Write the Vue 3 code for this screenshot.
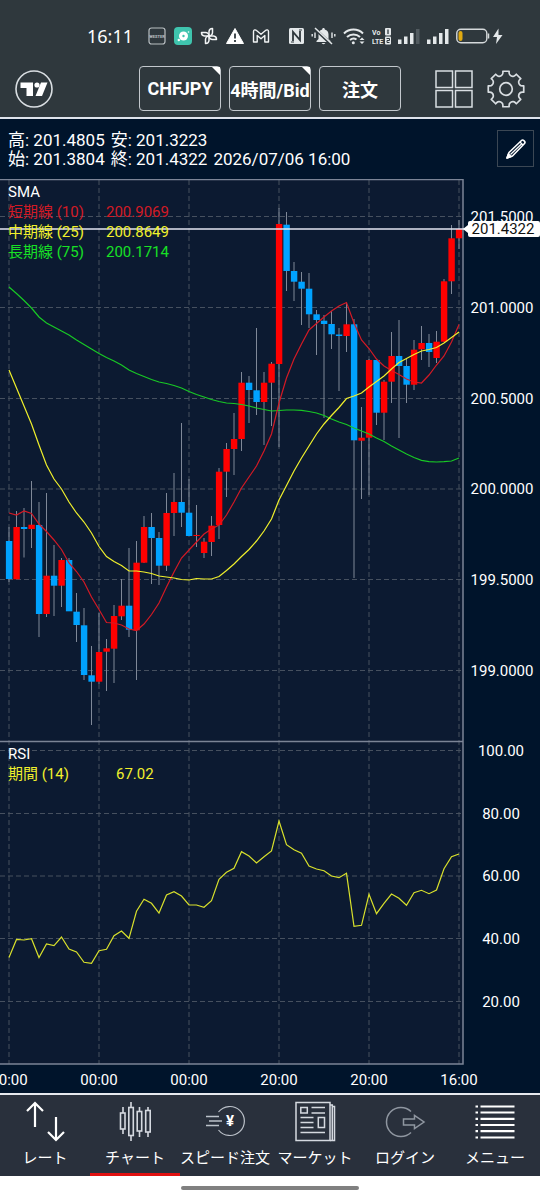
<template>
  <div class="app">
    <header class="top">
      <div class="status-bar">
        <div class="status-group">
          <span class="clock">16:11</span>
          <svg width="18" height="18" viewBox="0 0 18 18" fill="none">
            <rect x="1" y="1" width="16" height="16" rx="2.500" stroke="#b9bfc2" stroke-width="1.200" />
            <text x="9" y="11" class="tiny" text-anchor="middle">WESTER</text>
          </svg>
          <svg width="18" height="18" viewBox="0 0 18 18">
            <rect width="18" height="18" rx="4" fill="#3fc4ae" />
            <circle cx="9.500" cy="9" r="4.500" fill="#fff" />
            <circle cx="9.500" cy="9" r="1.200" fill="#3fc4ae" />
            <circle cx="4.800" cy="13" r="1.200" fill="#fff" />
            <circle cx="14.500" cy="5" r="0.800" fill="#fff" />
          </svg>
          <svg width="18" height="18" viewBox="0 0 18 18" fill="none" stroke="#f2f4f5" stroke-width="1.500" stroke-linejoin="round">
            <path d="M9 9V4.500A3.400 3.400 0 0 1 12.500 1.500V5.500A3.500 3.500 0 0 1 9 9Z" />
            <path d="M9 9H13.500A3.400 3.400 0 0 1 16.500 12.500H12.500A3.500 3.500 0 0 1 9 9Z" />
            <path d="M9 9V13.500A3.400 3.400 0 0 1 5.500 16.500V12.500A3.500 3.500 0 0 1 9 9Z" />
            <path d="M9 9H4.500A3.400 3.400 0 0 1 1.500 5.500H5.500A3.500 3.500 0 0 1 9 9Z" />
          </svg>
          <svg width="18" height="18" viewBox="0 0 18 18">
            <path d="M9 1.500L17.500 16.500H.5Z" fill="#fff" stroke="#fff" stroke-linejoin="round" />
            <path d="M9 6.500V11.500M9 13V15" stroke="#2f383d" stroke-width="1.800" />
          </svg>
          <svg width="18" height="18" viewBox="0 0 18 18" fill="none" stroke="#f2f4f5" stroke-width="1.400" stroke-linejoin="round">
            <path d="M1.500 15V4.500C1.500 2.500 3.500 2.500 4.500 3.500L9 7.200L13.500 3.500C14.500 2.500 16.500 2.500 16.500 4.500V15H12.800V8.500L9 11.700L5.200 8.500V15Z" />
          </svg>
        </div>
        <div class="status-group right">
          <svg width="15" height="16" viewBox="0 0 15 16">
            <rect width="15" height="16" rx="1.500" fill="#e4e8ea" />
            <path d="M4 13V4L11 12V3" fill="none" stroke="#2f383d" stroke-width="1.800" />
            <path d="M2 14H5M10 2H13" stroke="#2f383d" />
          </svg>
          <svg width="25" height="18" viewBox="0 0 25 18" fill="#e4e8ea">
            <path d="M12.500 1C13.300 1 13.800 1.600 13.800 2.400C16.300 3 17.500 5 17.500 7.500V12L19.500 14V15H5.500V14L7.500 12V7.500C7.500 5 8.700 3 11.200 2.400C11.200 1.600 11.700 1 12.500 1ZM10.700 16H14.300C14 17.500 11 17.500 10.700 16Z" />
            <path d="M3 1L20 17" stroke="#2f383d" stroke-width="3" />
            <path d="M4 1L21 17" stroke="#e4e8ea" stroke-width="1.500" />
            <path d="M1.200 7V9.500M4 5.500V11M23.800 7V9.500M21 5.500V11" stroke="#e4e8ea" stroke-width="1.400" />
          </svg>
          <svg width="22" height="18" viewBox="0 0 22 18" fill="none" stroke="#e4e8ea" stroke-width="2">
            <path d="M1 6.500A13.500 13.500 0 0 1 20 6.500M4 10A9.500 9.500 0 0 1 17 10M7 13A5.500 5.500 0 0 1 13.500 12.500" />
            <circle cx="10.300" cy="15.700" r="1.500" fill="#e4e8ea" stroke="none" />
            <path d="M16.500 13L19 10.500L21.500 13ZM16.500 14.500L19 17L21.500 14.500Z" fill="#e4e8ea" stroke="none" />
          </svg>
          <svg width="19" height="18" viewBox="0 0 19 18" fill="#e4e8ea">
            <text x="0" y="8" class="volte">Vo</text>
            <text x="0" y="17" class="volte">LTE</text>
            <rect x="13" y="1" width="6" height="7.500" rx="1" />
            <path d="M16 2.500V7" stroke="#2f383d" stroke-width="1.300" />
            <rect x="13" y="9.500" width="6" height="8" rx="1" />
            <path d="M14.500 11.500H17.500V13.500H15V15.500H17.500" fill="none" stroke="#2f383d" />
          </svg>
          <svg width="22" height="18" viewBox="0 0 22 18" fill="#e4e8ea">
            <rect x="0" y="12.500" width="3.500" height="4.500" />
            <rect x="6" y="9.500" width="3.500" height="7.500" />
            <rect x="12" y="6" width="3.500" height="11" />
            <rect x="18" y="2" width="3.500" height="15" fill="#525b60" />
          </svg>
          <svg width="22" height="18" viewBox="0 0 22 18" fill="#e4e8ea">
            <rect x="0" y="12.500" width="3.500" height="4.500" />
            <rect x="6" y="9.500" width="3.500" height="7.500" />
            <rect x="12" y="6" width="3.500" height="11" />
            <rect x="18" y="2" width="3.500" height="15" />
          </svg>
          <svg width="48" height="18" viewBox="0 0 48 18" fill="none">
            <rect x="0.800" y="2.300" width="30" height="13.500" rx="4" stroke="#d5d9db" stroke-width="1.400" />
            <rect x="2.500" y="4" width="4" height="10" rx="2" fill="#e0a911" />
            <path d="M32.500 6.500V11.500" stroke="#d5d9db" stroke-width="1.500" />
            <path d="M42.500 1.500L37 10H41L40 17L46.500 8H42.500Z" fill="#e4e8ea" />
          </svg>
        </div>
      </div>

      <div class="toolbar">
        <button class="icon-btn" aria-label="TradingView">
          <svg width="38" height="38" viewBox="0 0 38 38">
            <circle cx="19" cy="19" r="18" fill="none" stroke="#d9dee2" stroke-width="1.600" />
            <path d="M5.500 12.500H18V26H11.500V18H5.500Z" fill="#fff" />
            <circle cx="22" cy="15" r="2.600" fill="#fff" />
            <path d="M26 12.500H32.500L27 26H20.500Z" fill="#fff" />
          </svg>
        </button>
        <div class="toolbar-buttons">
          <button v-for="btn in toolButtons" :key="btn.label" class="tool-btn" :class="{ corner: btn.corner }">
            {{ btn.label }}
          </button>
        </div>
        <div class="toolbar-icons">
          <button class="icon-btn" aria-label="レイアウト">
            <svg width="38" height="38" viewBox="0 0 38 38" fill="none" stroke="#d9dee2" stroke-width="1.500">
              <rect x="1" y="1" width="16.500" height="16.500" />
              <rect x="20.500" y="1" width="16.500" height="16.500" />
              <rect x="1" y="20.500" width="16.500" height="16.500" />
              <rect x="20.500" y="20.500" width="16.500" height="16.500" />
            </svg>
          </button>
          <button class="icon-btn" aria-label="設定">
            <svg width="38" height="38" viewBox="0 0 38 38" fill="none" stroke="#d9dee2" stroke-width="1.700" stroke-linejoin="round">
              <path :d="gearPath" />
              <circle cx="19" cy="19" r="6.300" />
            </svg>
          </button>
        </div>
      </div>
    </header>

    <main>
      <div class="quote">
        <div class="quote-values">
          <span>高: 201.4805</span><span>安: 201.3223</span><span></span>
          <span>始: 201.3804</span><span>終: 201.4322</span><span>2026/07/06 16:00</span>
        </div>
        <button class="edit-btn" aria-label="描画">
          <svg width="24" height="24" viewBox="0 0 24 24" fill="none" stroke="#fff" stroke-width="1.600" stroke-linejoin="round">
            <path d="M3 21L5 15.500L17.500 3.500C19 2 22 5 20.500 6.500L8.500 19Z" />
            <path d="M6.500 17.500L18 6.500M16 5L19 8" stroke-width="1.200" />
            <path d="M3 21L4.500 17L7 19.500Z" fill="#fff" />
          </svg>
        </button>
      </div>

      <div class="chart">
        <svg class="chart-svg" viewBox="0 179 540 914">
          <rect x="-2" y="179.500" width="465" height="884.500" fill="#0c1a31" />
          <g class="grid">
            <line v-for="g in priceGrid" :key="g.label" x1="0" x2="463" :y1="g.y" :y2="g.y" />
            <line v-for="g in rsiGrid" :key="g.label" x1="0" x2="463" :y1="g.y" :y2="g.y" />
            <line v-for="t in timeGrid" :key="t.x" :x1="t.x" :x2="t.x" y1="180" y2="1064" />
          </g>

          <g v-for="(c, i) in candles" :key="i">
            <line class="wick" :x1="xAt(i)" :x2="xAt(i)" :y1="c[3]" :y2="c[4]" />
            <rect :x="xAt(i) - 3.1" :y="c[1]" width="6.400" :height="c[2] - c[1]" :fill="c[0] ? '#ff0000' : '#00a2ff'" />
          </g>

          <polyline class="series" :points="toPoints(smaLong)" stroke="#18c925" />
          <polyline class="series" :points="toPoints(smaShort)" stroke="#d31a25" />
          <polyline class="series" :points="toPoints(smaMiddle)" stroke="#f0f02c" />
          <polyline class="series" :points="toPoints(rsi)" stroke="#d8e02c" />

          <path class="frame" d="M0 179.500H463V1064H0M0 741.500H463" />

          <g class="axis">
            <text v-for="g in priceGrid" :key="g.label" x="502" :y="g.y + 5">{{ g.label }}</text>
            <text v-for="g in rsiGrid" :key="g.label" x="501" :y="g.y + 5">{{ g.label }}</text>
            <text v-for="t in timeGrid" :key="t.x" :x="t.x" y="1085">{{ t.label }}</text>
          </g>

          <!-- current price -->
          <line x1="0" x2="466" y1="229" y2="229" stroke="#e3e6f2" stroke-width="1.600" />
          <path d="M463 229L468 225V223Q468 221 470 221H538Q540 221 540 223V235Q540 237 538 237H470Q468 237 468 235V233Z" fill="#fff" />
          <text class="price-tag" x="503" y="234">201.4322</text>
        </svg>

        <dl class="legend sma">
          <dt>SMA</dt><dd></dd>
          <template v-for="s in smaLegend" :key="s.name">
            <dt :class="s.cls">{{ s.name }}</dt>
            <dd :class="s.cls">{{ s.value }}</dd>
          </template>
        </dl>
        <dl class="legend rsi">
          <dt>RSI</dt><dd></dd>
          <dt class="middle">期間 (14)</dt>
          <dd class="middle">67.02</dd>
        </dl>
      </div>
    </main>

    <nav class="tabs">
      <button v-for="tab in tabs" :key="tab.id" class="tab" :class="{ active: currentTab === tab.id }"
        @click="currentTab = tab.id">
        <svg width="48" height="42" viewBox="0 0 48 42" fill="none" :stroke="tab.color" stroke-width="1.500">
          <g v-if="tab.id === 'rate'" stroke-width="2.200">
            <path d="M14 26V2M6 10L14 2L22 10" />
            <path d="M35 16V39M27 31L35 39L43 31" />
          </g>
          <g v-else-if="tab.id === 'chart'" stroke-width="1.600">
            <path d="M12 6V12M12 28V33M20 1V7M20 34V40M28.500 6V11M28.500 30V36M37 6V10M37 31V36" />
            <rect x="9.500" y="12" width="4.500" height="16" />
            <rect x="17.800" y="6.500" width="4.500" height="28" />
            <rect x="26.200" y="10.500" width="4.500" height="19.500" />
            <rect x="34.700" y="9.500" width="4.500" height="21.500" />
          </g>
          <g v-else-if="tab.id === 'speed'">
            <path d="M17.500 11A14.500 14.500 0 1 1 17.500 29" stroke-width="1.200" />
            <path d="M5 15.500H18M8 20H21M5 24.500H18" />
            <text x="29" y="25" class="yen">¥</text>
          </g>
          <g v-else-if="tab.id === 'market'">
            <rect x="5" y="1.500" width="34" height="38" />
            <path d="M39 4H41.300V39.500H39M41.300 5.500H43.500V39.500H39" />
            <rect x="9.800" y="6.500" width="6.500" height="5.500" />
            <path d="M20.500 6.500H34M20.500 12H34M9.500 16.500H22.500M9.500 21.500H22.500M9.500 26.500H22.500M9.500 31.500H34" />
            <rect x="27.300" y="16.500" width="6.200" height="10" />
          </g>
          <g v-else-if="tab.id === 'login'">
            <path d="M30 10.500A14.500 14.500 0 1 0 30 31.500" />
            <path d="M22.500 18H33.500V14.500L43 21L33.500 27.500V24H22.500Z" />
          </g>
          <g v-else stroke-width="2.200">
            <path v-for="y in [5.5, 11.5, 17.8, 24, 30.2, 36.5]" :key="y" :d="`M4.500 ${y}H7M9.500 ${y}H43.500`" />
          </g>
        </svg>
        <span>{{ tab.label }}</span>
      </button>
    </nav>
    <div class="gesture"><div class="pill"></div></div>
  </div>
</template>

<script setup>
import { ref } from 'vue';

const currentTab = ref('chart');

const toolButtons = [
  { label: 'CHFJPY', corner: true },
  { label: '4時間/Bid', corner: true },
  { label: '注文', corner: false },
];

const tabs = [
  { id: 'rate', label: 'レート', color: '#ffffff' },
  { id: 'chart', label: 'チャート', color: '#d5d9e0' },
  { id: 'speed', label: 'スピード注文', color: '#bcc2ca' },
  { id: 'market', label: 'マーケット', color: '#d5d9e0' },
  { id: 'login', label: 'ログイン', color: '#8f96a0' },
  { id: 'menu', label: 'メニュー', color: '#ffffff' },
];

const smaLegend = [
  { name: '短期線 (10)', value: '200.9069', cls: 'short' },
  { name: '中期線 (25)', value: '200.8649', cls: 'middle' },
  { name: '長期線 (75)', value: '200.1714', cls: 'long' },
];

const priceGrid = [
  { label: '201.5000', y: 216.5 },
  { label: '201.0000', y: 307.5 },
  { label: '200.5000', y: 398.5 },
  { label: '200.0000', y: 489 },
  { label: '199.5000', y: 579.5 },
  { label: '199.0000', y: 670.5 },
];

const rsiGrid = [
  { label: '100.00', y: 750.5 },
  { label: '80.00', y: 813.5 },
  { label: '60.00', y: 876 },
  { label: '40.00', y: 938.5 },
  { label: '20.00', y: 1001.5 },
];

const timeGrid = [
  { label: '00:00', x: 9 },
  { label: '00:00', x: 99 },
  { label: '00:00', x: 189 },
  { label: '20:00', x: 279 },
  { label: '20:00', x: 369 },
  { label: '16:00', x: 459 },
];

// [up, body top, body bottom, wick top, wick bottom]
const candles = [
  [0, 541, 579, 527, 582], [1, 527, 579.3, 511, 579], [0, 527, 529, 508, 557.5],
  [1, 524.7, 529, 481, 548], [0, 525, 614, 502, 637], [1, 575.7, 614, 493, 617],
  [0, 575.7, 585.7, 545, 616], [1, 560, 585.7, 558, 607], [0, 560, 611.3, 558, 611],
  [0, 611.7, 625, 593, 642], [0, 625.3, 675, 608, 680], [0, 675.3, 681.7, 646, 725],
  [1, 652, 681.7, 613, 684], [1, 648.3, 651.7, 639, 691], [1, 616, 648.7, 605, 683],
  [1, 605.7, 616.3, 579, 620], [0, 605.7, 629.7, 548, 637], [1, 562.7, 630.3, 541, 680],
  [1, 527, 562.7, 516, 563], [0, 527, 538, 513, 584], [0, 538, 565.7, 532, 585],
  [1, 513, 565.7, 493, 571], [1, 502, 513, 473, 536], [0, 502, 512.7, 423, 527],
  [0, 512.7, 536, 479, 536], [1, 535, 536, 505, 547], [1, 541.7, 553, 538, 558],
  [1, 525.7, 542, 516, 556], [1, 471.7, 525, 468, 539], [1, 449, 471.7, 443, 497],
  [1, 439, 449, 413, 475], [1, 382.7, 439, 372, 451], [0, 382.7, 390, 376, 423],
  [0, 390.3, 402, 328, 415], [1, 382.7, 402, 372, 445], [1, 363.7, 382.7, 362, 426],
  [1, 224, 364, 208, 447], [0, 224.7, 271, 212, 291], [0, 271, 281.7, 262, 301],
  [0, 281.7, 288.7, 272, 325], [0, 288.7, 314.3, 273, 328], [0, 314.3, 320, 310, 355],
  [0, 320.7, 324, 315, 418], [0, 324, 334.3, 311, 349], [0, 334.5, 336, 328, 391],
  [1, 324.3, 336, 303, 352], [0, 324.3, 440.3, 319, 578], [1, 437.7, 440.7, 407, 499],
  [1, 360, 437.7, 359, 495], [0, 360, 412.7, 360, 425], [1, 381.7, 412.7, 380, 440],
  [1, 356, 381.7, 332, 403], [0, 356, 366, 320, 438], [0, 366, 384.7, 359, 403],
  [1, 349.7, 384.7, 340, 390], [1, 343, 349.3, 326, 360], [0, 343, 352, 334, 367],
  [1, 341.7, 358, 331, 363], [1, 281.3, 341.7, 279, 342], [1, 238.3, 281.3, 225, 294],
  [1, 229, 238.3, 220, 249],
];

const smaShort = [
  513, 515, 511, 513.5, 524, 531.5, 540, 549.5, 563, 571.5, 582, 597, 609.5, 622.5, 623,
  625, 629, 630.5, 624, 614.5, 603, 587, 572, 558, 550, 542, 534, 529, 525, 515,
  502, 488, 477, 466, 451, 434, 403, 378, 359, 344, 330, 323.5, 317, 311, 306,
  302.5, 323, 340, 348.5, 359, 366, 370.5, 374.5, 379, 382, 383, 375, 365, 356, 342, 324.5,
];

const smaMiddle = [
  370, 388, 406, 424, 445, 465, 479, 489, 502, 513, 522, 533, 546.5, 556.5, 561.5,
  565.5, 571, 571, 572, 573.5, 576, 577, 578, 579.5, 580, 578.5, 579, 579, 576.5, 570.5,
  564, 556.5, 549.5, 541, 531, 519, 500, 485.5, 471, 458, 446, 434, 424, 415.5, 407.5,
  398.5, 396, 393, 387, 381.5, 376, 369, 362.5, 358.5, 354.5, 351, 349.5, 347.5, 343, 337.5, 332,
];

const smaLong = [
  287, 293.5, 300.5, 308, 317, 323, 327, 331, 335, 340, 344.5, 349, 353.5, 357.5, 361,
  365, 370, 373.5, 376.5, 379.5, 382, 383.5, 385.5, 388, 391.5, 394.5, 397, 399.5, 401.5, 403,
  403.5, 404.5, 406, 408, 409.5, 411, 410.5, 410, 410, 410.3, 411.5, 413, 415.5, 419, 422,
  424.5, 428, 431, 434, 438, 441.5, 446, 450, 454, 457.5, 460.3, 461.7, 462, 461.7, 461, 458,
];

const rsi = [
  957.5, 939.5, 940, 938.7, 957.5, 944, 945.7, 937, 949, 952, 962.3, 963.3, 950.7, 949.3, 935.7,
  931, 938.3, 911.3, 899.3, 903.3, 913, 895, 891.7, 896, 905, 905, 907.3, 900.7, 879.3, 872.3,
  868.3, 851.7, 856, 863, 856.7, 851, 821, 844.7, 849.7, 853.3, 866, 869, 870.7, 876, 877.7,
  873.3, 926.3, 925.3, 894.3, 913.7, 903.3, 894, 898.3, 905.3, 892.7, 890.3, 893.7, 890, 868.7, 856.7, 854,
];

const xAt = (i) => 9 + i * 7.5;

const toPoints = (values) => values.map((y, i) => `${xAt(i)},${y}`).join(' ');

// eight teeth around the centre of a 38px box
const buildGear = () => {
  const at = (deg, r) => {
    const a = (deg * Math.PI) / 180;
    return `${(19 + r * Math.cos(a)).toFixed(2)} ${(19 + r * Math.sin(a)).toFixed(2)}`;
  };
  let d = '';
  for (let i = 0; i < 8; i++) {
    const a = i * 45;
    d += `${i === 0 ? 'M' : 'L'}${at(a - 10, 18)}L${at(a + 10, 18)}`;
    d += `Q${at(a + 11, 15)} ${at(a + 16, 14.5)}Q${at(a + 22.5, 13.6)} ${at(a + 29, 14.5)}Q${at(a + 34, 15)} ${at(a + 35, 18)}`;
  }
  return d + 'Z';
};
const gearPath = buildGear();
</script>

<style>
body {
  background: #fff;
}
</style>

<style scoped>
.app {
  font-family: Roboto, "Noto Sans CJK JP", sans-serif;
  color: #fff;
  background: #00142b;
}

button {
  font-family: inherit;
  color: inherit;
  background: none;
  border: none;
  padding: 0;
  cursor: pointer;
}

svg {
  display: block;
}

.top {
  background: #2f383d;
  border-bottom: 2px solid #dfe3ec;
}

.status-bar {
  display: flex;
  justify-content: space-between;
  align-items: center;
  height: 48px;
  padding: 12px 36px 0 87px;
}

.status-group {
  display: flex;
  align-items: center;
  gap: 8px;
}

.status-group.right {
  gap: 7px;
}

.clock {
  font-family: "Noto Sans", sans-serif;
  font-size: 18px;
  line-height: 24px;
  width: 53px;
}

.tiny {
  font-size: 4px;
  font-weight: bold;
  fill: #b9bfc2;
}

.volte {
  font-size: 7px;
  font-weight: bold;
}

.toolbar {
  display: flex;
  align-items: center;
  gap: 34px;
  height: 57px;
  padding: 0 15px;
}

.toolbar-buttons {
  display: flex;
  gap: 8px;
  margin-left: auto;
}

.toolbar-icons {
  display: flex;
  gap: 14px;
}

.tool-btn {
  position: relative;
  width: 82px;
  height: 45px;
  border: 1px solid #c3c8cd;
  border-radius: 4px;
  font-size: 18px;
  font-weight: bold;
  white-space: nowrap;
  display: flex;
  align-items: center;
  justify-content: center;
}

.tool-btn.corner::after {
  content: "";
  position: absolute;
  top: 0;
  right: 0;
  width: 8px;
  height: 8px;
  background: #fff;
  clip-path: polygon(0 0, 100% 0, 100% 100%);
}

.quote {
  display: flex;
  justify-content: space-between;
  align-items: flex-start;
  padding: 11px 6px 11px 8px;
}

.quote-values {
  display: grid;
  grid-template-columns: repeat(3, auto);
  column-gap: 6px;
  padding-top: 1px;
  font-size: 17px;
  line-height: 19px;
  height: 37px;
}

.edit-btn {
  width: 37px;
  height: 37px;
  border: 1px solid #3b4754;
  display: flex;
  align-items: center;
  justify-content: center;
}

.chart {
  position: relative;
}

.chart-svg {
  width: 100%;
  height: auto;
}

.grid line {
  stroke: #46505f;
  stroke-width: 1;
  stroke-dasharray: 5 3;
}

.wick {
  stroke: #7f8898;
  stroke-width: 1;
}

.series {
  fill: none;
  stroke-width: 1.2;
}

.frame {
  fill: none;
  stroke: #7b8496;
  stroke-width: 1.5;
}

.axis text {
  fill: #fff;
  font-size: 15px;
  text-anchor: middle;
}

.price-tag {
  fill: #111;
  font-size: 15px;
  text-anchor: middle;
}

.legend {
  position: absolute;
  left: 8px;
  margin: 0;
  display: grid;
  grid-template-columns: 98px auto;
  font-size: 15px;
  line-height: 20px;
}

.legend dd {
  margin: 0;
}

.legend.sma {
  top: 3px;
}

.legend.rsi {
  top: calc(62% - 2px);
  grid-template-columns: 108px auto;
}

.short {
  color: #d31a25;
}

.middle {
  color: #f0f02c;
}

.long {
  color: #18e025;
}

.tabs {
  display: grid;
  grid-template-columns: repeat(6, 1fr);
  background: #29303c;
  border-top: 2px solid #e6e8ee;
}

.tab {
  display: flex;
  flex-direction: column;
  align-items: center;
  padding-top: 6px;
  gap: 4px;
  height: 81px;
  font-size: 15px;
  line-height: 22px;
  white-space: nowrap;
  border-bottom: 3px solid transparent;
}

.tab.active {
  border-bottom-color: #e01010;
}

.yen {
  font-size: 15px;
  font-weight: bold;
  fill: #fff;
  stroke: none;
  text-anchor: middle;
}

.gesture {
  display: flex;
  align-items: center;
  justify-content: center;
  height: 24px;
  background: #fff;
}

.pill {
  width: 33%;
  height: 4px;
  border-radius: 2px;
  background: #808080;
}
</style>
